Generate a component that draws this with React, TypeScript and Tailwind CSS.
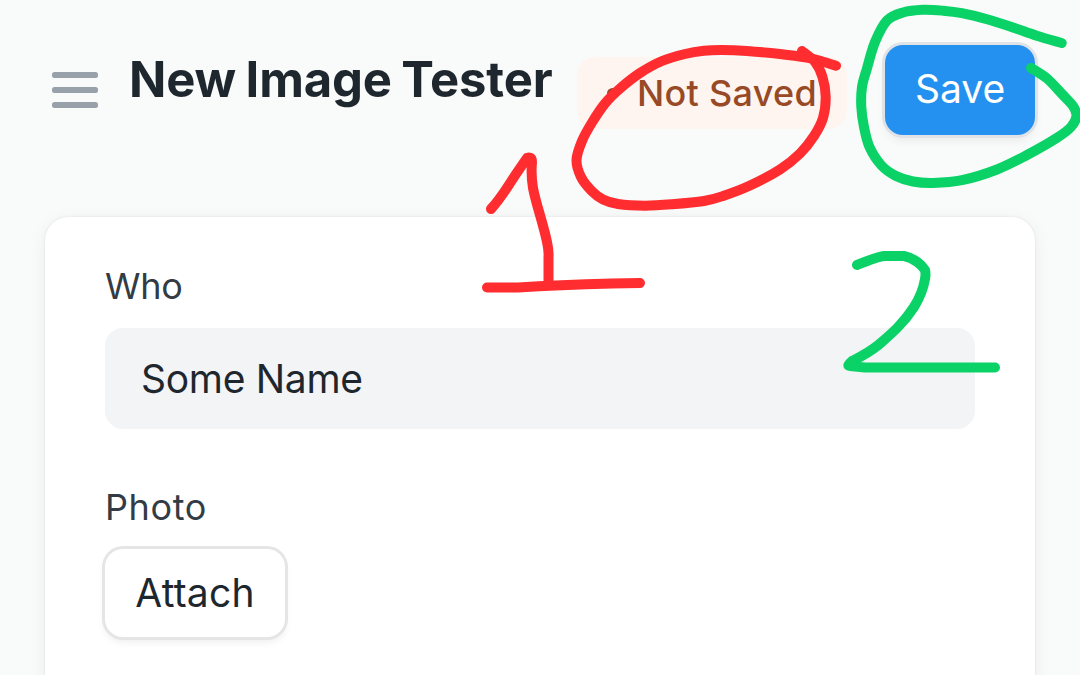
type Point = [number, number]

const badgeCircle: Point[] = [[836, 65.7], [823, 61.7], [806.7, 57.7], [780, 54], [746.7, 51], [721.7, 50], [704, 50.8], [685, 54], [662, 61], [640, 73], [620, 88.5], [605, 103.5], [592, 122.5], [582, 141], [576.5, 160], [581, 177], [591.7, 191], [603, 199.5], [618, 204], [645, 205.7], [672, 204.3], [704, 201], [723, 196], [750, 185.5], [780, 169.5], [800, 153.5], [814, 136], [823, 118], [825.7, 97], [822.5, 77], [815, 62], [802, 51]]
const saveCircle: Point[] = [[1061.7, 43], [1036.7, 35.7], [1013, 27.5], [987, 19.3], [962, 13.2], [943, 10.7], [923, 9.8], [903, 12.5], [887, 20.5], [875, 42], [867, 68.3], [862, 87], [861.3, 107], [864, 127], [869.5, 147], [881.5, 165.5], [896, 176], [913, 181.5], [933, 183], [962, 180.2], [997, 169.5], [1027, 155], [1056.7, 138], [1071, 127], [1076.5, 116], [1073, 106], [1062, 94], [1047, 78.5], [1031, 68]]

function smooth(points: Point[]) {
  return points.slice(0, -1).reduce((path, p1, i) => {
    const p0 = points[i - 1] ?? p1
    const p2 = points[i + 1]
    const p3 = points[i + 2] ?? p2
    return `${path} C${p1[0] + (p2[0] - p0[0]) / 6} ${p1[1] + (p2[1] - p0[1]) / 6} ${p2[0] - (p3[0] - p1[0]) / 6} ${p2[1] - (p3[1] - p1[1]) / 6} ${p2[0]} ${p2[1]}`
  }, `M${points[0][0]} ${points[0][1]}`)
}

function Annotations() {
  return (
    <svg
      className="pointer-events-none absolute inset-0"
      width="1080"
      height="675"
      viewBox="0 0 1080 675"
      fill="none"
      strokeWidth="10"
      strokeLinecap="round"
      strokeLinejoin="round"
    >
      <g stroke="#ff2d30">
        <path d={smooth(badgeCircle)} />
        <path d="M491 209 C502 197 508 186 516 174 L527 158 Q532 156 532 162 C531 173 532 182 533 188 C536 204 543 223 547 242 Q549 251 548.500 257 V285" />
        <path d="M487 287.500 H518 C540 286 570 284.500 612 283.500 L640 283" />
      </g>
      <g stroke="#0bd267">
        <path d={smooth(saveCircle)} />
        <path d="M857 265 C867 261 878 256.500 884 256 H904 C914 258 922 265 925 270 Q926 274 925 279 C923 291 919 299 914 307 C903 324 891 334 879 344.500 C867 354 860 357 852 361 Q846 366 850 366 L865 367.500 H995" />
      </g>
    </svg>
  )
}

function MenuIcon() {
  return (
    <svg className="mt-[71px] ml-[52px] shrink-0" width="46" height="38" viewBox="0 0 46 38" fill="#98a1a9">
      <rect y="1" width="46" height="6" rx="2.500" />
      <rect y="16" width="46" height="6" rx="2.500" />
      <rect y="31" width="46" height="6" rx="2.500" />
    </svg>
  )
}

export default function App() {
  return (
    <div className='relative h-[675px] w-[1080px] overflow-hidden bg-[#f9fbfa] font-["Inter",sans-serif] font-normal whitespace-nowrap text-[#1f272e]'>
      <header className="flex h-[217px] items-start">
        <MenuIcon />
        <h1 className="mt-[50px] ml-[31px] w-[448px] shrink-0 text-[49px] leading-[60px] font-bold tracking-[-0.15px] [word-spacing:-2px]">New Image Tester</h1>
        <div className="mt-[57px] flex h-[72px] w-[270px] shrink-0 items-center rounded-[18px] bg-[#fff5f0] pl-[30px] text-[36px] font-medium text-[#974a25]">
          <span className="mr-[19px] size-[11px] rounded-full bg-[#974a25]" />
          <span className="tracking-[0.3px]">Not Saved</span>
        </div>
        <button className="mt-[45px] ml-[38px] flex h-[90px] w-[150px] shrink-0 items-center justify-center rounded-[18px] bg-[#2490ef] pb-[2px] text-[39px] text-white shadow-[0_0_0_3px_#dfe3e7,0_6px_10px_rgba(0,0,0,0.06)]">
          Save
        </button>
      </header>
      <main className="mx-[45px] h-[500px] rounded-[24px] bg-white px-[60px] pt-[46px] shadow-[0_0_3px_rgba(0,0,0,0.08),0_3px_18px_rgba(0,0,0,0.06)]">
        <label className="block h-[65px] text-[36px] leading-[46px] tracking-[-0.2px] text-[#333c44]">Who</label>
        <div className="flex h-[101px] items-center rounded-[18px] bg-[#f3f4f6] pt-px pl-[36px] text-[39px] tracking-[-0.3px]">Some Name</div>
        <label className="mt-[55px] block h-[65px] text-[36px] leading-[46px] tracking-[0.6px] text-[#333c44]">Photo</label>
        <button className="flex h-[88px] w-[180px] items-center justify-center rounded-[18px] bg-white text-[39px] tracking-[0.2px] shadow-[0_0_0_3px_#e5e5e5,0_5px_8px_rgba(0,0,0,0.07)]">
          Attach
        </button>
      </main>
      <Annotations />
    </div>
  )
}
